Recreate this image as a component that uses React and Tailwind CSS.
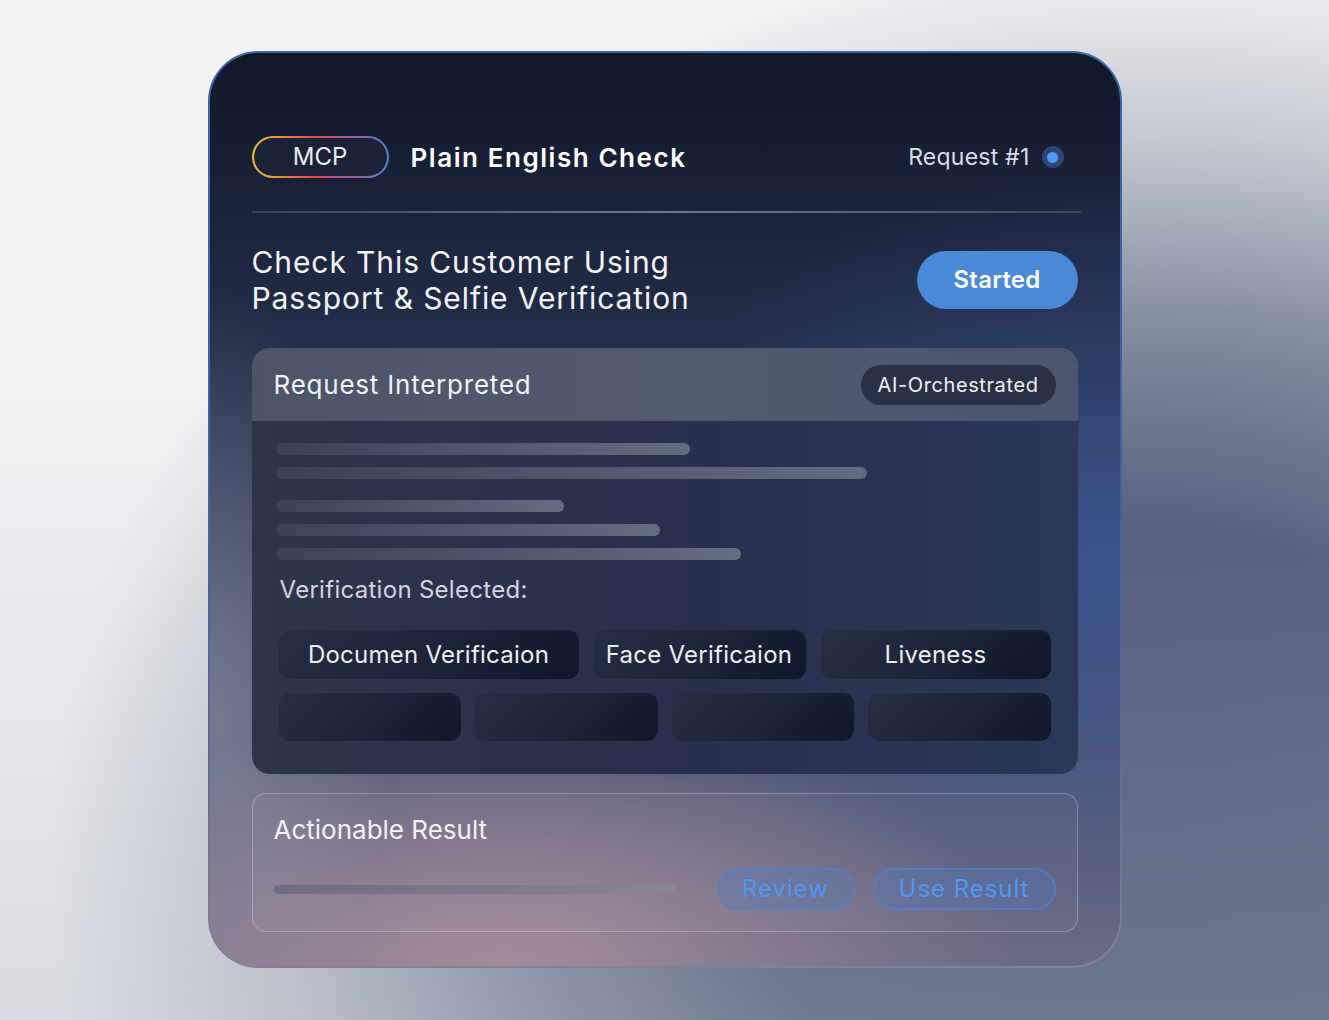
import React from "react";

const bars = [
  { w: "w-[414px]", mt: "" },
  { w: "w-[591px]", mt: "mt-[12px]" },
  { w: "w-[288px]", mt: "mt-[21px]" },
  { w: "w-[384px]", mt: "mt-[12px]" },
  { w: "w-[465px]", mt: "mt-[12px]" },
];

const Chip = ({ className = "", children }) => (
  <div
    className={`flex items-center justify-center rounded-[11px] bg-[linear-gradient(135deg,#272d43_0%,#1c2237_55%,#111729_100%)] text-[24px] tracking-[0.01em] text-[#eceef4] ${className}`}
  >
    {children}
  </div>
);

export default function App() {
  return (
    <div
      className="min-h-[1020px] w-full overflow-hidden pt-[51px] bg-[linear-gradient(to_bottom,rgba(255,255,255,0)_35%,rgba(170,175,190,0.35)_100%),radial-gradient(ellipse_1100px_900px_at_1150px_850px,#4b5676_0%,#505b7a_36%,#8890a4_60%,#c8cbd3_80%,#f3f3f5_100%)]"
      style={{ fontFamily: "Inter, 'Noto Sans', sans-serif" }}
    >
      {/* Card with faded blue edge */}
      <div className="mx-auto w-[914px] rounded-[50px] p-[2px] bg-[linear-gradient(to_bottom,#3b66ad_0%,#3f62a0_45%,#5f6890_75%,#858096_100%)]">
        <div className="rounded-[48px] px-[42px] pt-[83px] pb-[34px] bg-[radial-gradient(ellipse_480px_380px_at_98%_55%,rgba(60,95,160,0.65),transparent),radial-gradient(ellipse_520px_260px_at_32%_100%,rgba(176,148,160,0.85),transparent),radial-gradient(ellipse_180px_420px_at_0%_72%,rgba(150,155,175,0.55),transparent),linear-gradient(to_bottom,#111828_0%,#1b233c_18%,#2b3553_42%,#434b6c_66%,#6b6985_100%)]">
          {/* Header */}
          <div className="flex items-center justify-between pr-[14px]">
            <div className="flex items-center">
              <div className="rounded-full p-[2px] bg-[linear-gradient(to_right,#f2c232_0%,#e8494f_45%,#a8569a_70%,#4a86e0_100%)]">
                <div className="flex h-[38px] w-[133px] items-center justify-center rounded-full bg-[#1b2237] text-[24px] text-[#e9ebf2]">
                  MCP
                </div>
              </div>
              <div className="ml-[22px] text-[26px] font-semibold tracking-[0.06em] text-white">
                Plain English Check
              </div>
            </div>
            <div className="flex items-center gap-[12px]">
              <span className="text-[23px] tracking-[0.01em] text-[#d9dce6]">Request #1</span>
              <span className="flex h-[22px] w-[22px] items-center justify-center rounded-full bg-[#2f4574]">
                <span className="h-[11px] w-[11px] rounded-full bg-[#4d9df2]" />
              </span>
            </div>
          </div>

          {/* Divider */}
          <div className="mt-[33px] h-[2px] w-[829px] bg-[linear-gradient(to_right,#3a4258,#707890_50%,#3d4660)]" />

          {/* Title row */}
          <div className="mt-[31px] flex items-center justify-between">
            <div className="text-[30px] leading-[36px] tracking-[0.03em] text-[#f2f3f7]">
              Check This Customer Using
              <br />
              Passport &amp; Selfie Verification
            </div>
            <button className="flex h-[58px] w-[161px] items-center justify-center rounded-full bg-[#4a89d8] text-[24px] font-semibold tracking-[0.01em] text-white">
              Started
            </button>
          </div>

          {/* Request Interpreted */}
          <div className="mt-[32px] overflow-hidden rounded-[18px]">
            <div className="flex h-[73px] items-center justify-between bg-[linear-gradient(to_right,#4d5467,#525a6f_50%,#4a556f)] pl-[22px] pr-[22px]">
              <span className="text-[26px] tracking-[0.03em] text-[#f1f2f6]">Request Interpreted</span>
              <span className="flex h-[40px] items-center rounded-full bg-[#2a3046] px-[17px] text-[20px] tracking-[0.03em] text-[#eef0f5]">
                AI-Orchestrated
              </span>
            </div>
            <div className="bg-[linear-gradient(to_right,#2f344b,#282f4d_55%,#2b3859)] pb-[33px] pt-[22px]">
              <div className="pl-[24px]">
                {bars.map((b, i) => (
                  <div
                    key={i}
                    className={`h-[12px] rounded-full bg-[linear-gradient(to_right,#3b4258,#646c82)] ${b.w} ${b.mt}`}
                  />
                ))}
              </div>
              <div className="mt-[15px] pl-[28px] text-[24px] leading-[30px] tracking-[0.012em] text-[#d2d5df]">
                Verification Selected:
              </div>
              <div className="mt-[25px] px-[27px]">
                <div className="flex gap-[14px]">
                  <Chip className="h-[49px] w-[300px]">Documen Verificaion</Chip>
                  <Chip className="h-[49px] w-[213px]">Face Verificaion</Chip>
                  <Chip className="ml-[1px] h-[49px] flex-1">Liveness</Chip>
                </div>
                <div className="mt-[14px] grid grid-cols-4 gap-[14px]">
                  <Chip className="h-[48px]" />
                  <Chip className="h-[48px]" />
                  <Chip className="h-[48px]" />
                  <Chip className="h-[48px]" />
                </div>
              </div>
            </div>
          </div>

          {/* Actionable Result */}
          <div className="mt-[19px] rounded-[14px] border border-white/25 bg-white/[0.03] px-[21px] pb-[21px] pt-[20px]">
            <div className="text-[26px] leading-[32px] text-[#f1f1f5]">Actionable Result</div>
            <div className="mt-[22px] flex items-center justify-between">
              <div className="h-[9px] w-[402px] rounded-full bg-[linear-gradient(to_right,#6e6c80,#8a8698)]" />
              <div className="flex gap-[18px]">
                <button className="flex h-[42px] w-[138px] items-center justify-center rounded-full border-2 border-[#5282cc]/60 bg-[#4a7cc8]/30 text-[24px] tracking-[0.04em] text-[#5096f0]">
                  Review
                </button>
                <button className="flex h-[42px] w-[183px] items-center justify-center rounded-full border-2 border-[#5282cc]/60 bg-[#4a7cc8]/30 text-[24px] tracking-[0.04em] text-[#5096f0]">
                  Use Result
                </button>
              </div>
            </div>
          </div>
        </div>
      </div>
    </div>
  );
}
